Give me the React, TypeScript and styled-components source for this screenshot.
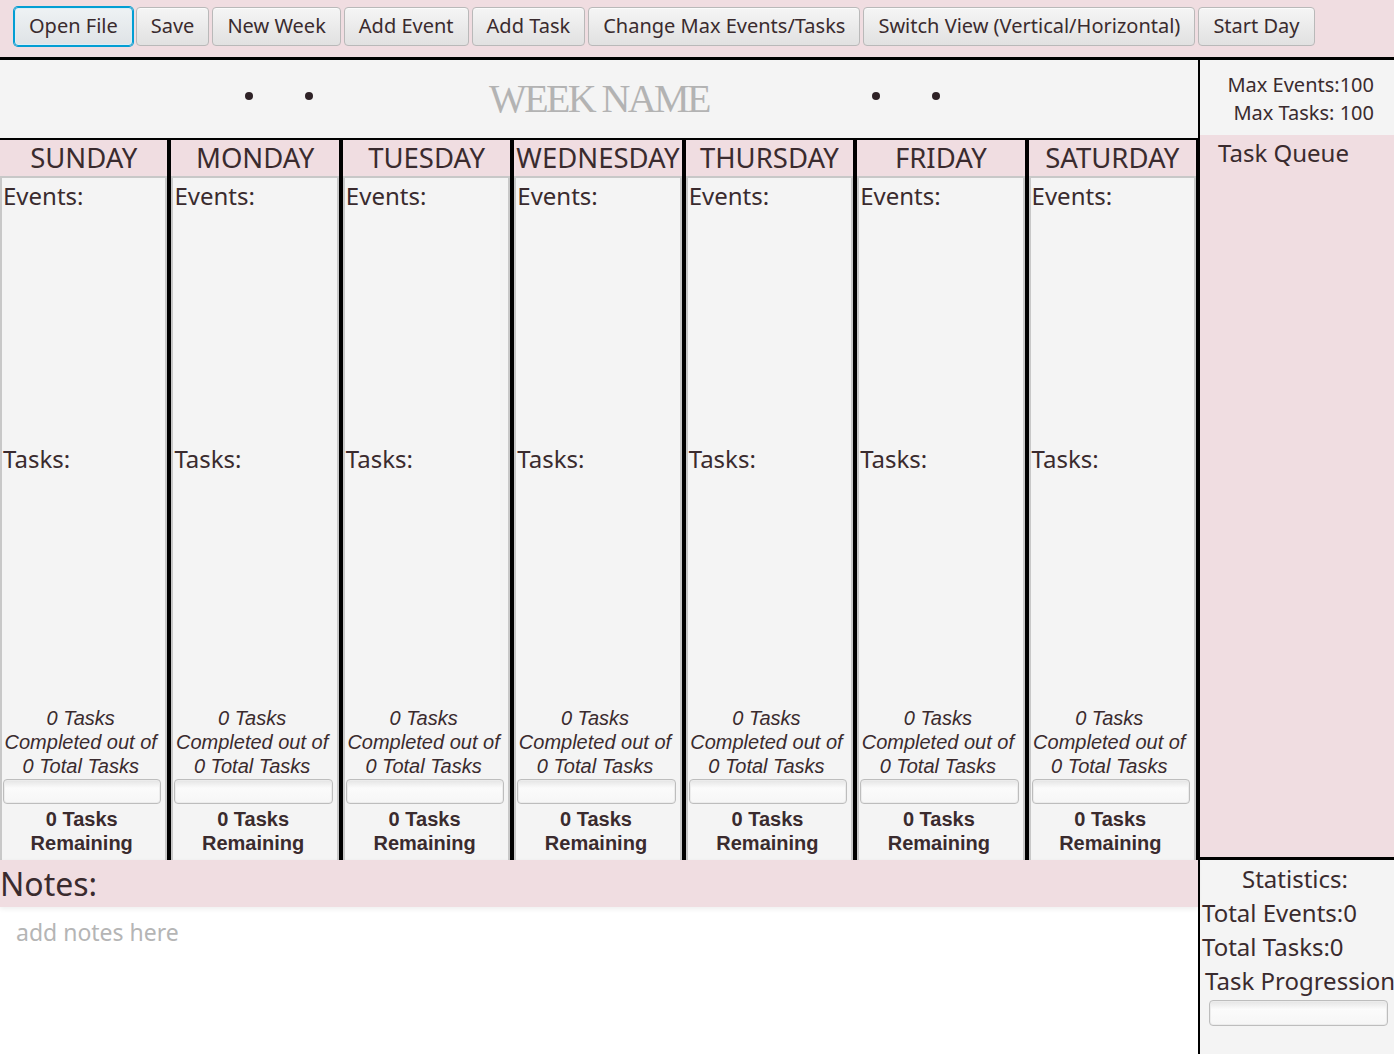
import React from 'react';
import styled, { createGlobalStyle, css } from 'styled-components';

const PINK = '#f0dde1';
const PANEL = '#f4f4f4';
const INK = '#3a2b2e';
const UI_FONT = '"Noto Sans", "Open Sans", sans-serif';

const Global = createGlobalStyle`
  html, body { margin: 0; padding: 0; height: 100%; overflow: hidden; }
  body { font-family: ${UI_FONT}; color: ${INK}; background: ${PINK}; }
  #root { height: 100%; }
  * { box-sizing: border-box; }
`;

const Shell = styled.div`
  display: flex;
  flex-direction: column;
  height: 100vh;
  width: 100%;
`;

const Toolbar = styled.div`
  height: 60px;
  flex: none;
  background: ${PINK};
  border-bottom: 3px solid #000;
  display: flex;
  align-items: flex-start;
  gap: 3px;
  padding: 7px 0 0 14px;
`;

const ToolButton = styled.button<{ $focused?: boolean }>`
  height: 39px;
  padding: 0 14px 2px;
  font-family: ${UI_FONT};
  font-size: 20px;
  color: ${INK};
  border: 1px solid #b9b9b9;
  border-radius: 4px;
  background: linear-gradient(to bottom, #f5f5f5, #e1e1e1);
  box-shadow: inset 0 1px 0 #fbfbfb;
  white-space: nowrap;
  cursor: pointer;
  ${(p) =>
    p.$focused &&
    css`
      border-color: #039ed3;
      box-shadow: 0 0 0 1px #039ed3, inset 0 0 0 1px #dbeef7;
      background: linear-gradient(to bottom, #eef2f4, #dfe3e6);
    `}
`;

const Main = styled.div`
  flex: 1;
  display: flex;
  min-height: 0;
`;

const LeftArea = styled.div`
  width: 1198px;
  flex: none;
  display: flex;
  flex-direction: column;
`;

const WeekHeader = styled.div`
  height: 80px;
  flex: none;
  background: ${PANEL};
  border-bottom: 2px solid #000;
  display: flex;
  align-items: center;
  padding-left: 245px;
`;

const DotGroup = styled.div<{ $gapBefore?: number }>`
  display: flex;
  gap: 52px;
  margin-left: ${(p) => p.$gapBefore ?? 0}px;
  margin-bottom: 6px;
`;

const Dot = styled.span`
  width: 8px;
  height: 8px;
  border-radius: 50%;
  background: #2e2226;
`;

const WeekTitle = styled.div`
  margin-left: 176px;
  font-family: "Liberation Serif", "DejaVu Serif", serif;
  font-size: 40px;
  letter-spacing: -2.6px;
  color: #b3b3b3;
  line-height: 1;
  width: 219px;
  white-space: nowrap;
`;

const DaysGrid = styled.div`
  flex: 1;
  display: grid;
  grid-template-columns: repeat(7, 1fr);
  column-gap: 4px;
  padding-right: 2px;
  background: #000;
  min-height: 0;
`;

const DayColumn = styled.div`
  display: flex;
  flex-direction: column;
  background: ${PINK};
  min-width: 0;
`;

const DayHeader = styled.div`
  height: 36px;
  flex: none;
  text-align: center;
  font-size: 27.5px;
  line-height: 36px;
  white-space: nowrap;
  overflow: hidden;
`;

const DayBody = styled.div`
  flex: 1;
  display: flex;
  flex-direction: column;
  background: ${PANEL};
  border: 2px solid #c8c8c8;
  border-bottom: none;
  padding: 2px 1px 5px;
`;

const SectionLabel = styled.div`
  font-size: 24px;
  line-height: 32px;
`;

const ListArea = styled.div`
  flex: 1;
`;

const CompletedText = styled.div`
  font-family: "Liberation Sans", Arial, sans-serif;
  font-style: italic;
  font-size: 20px;
  line-height: 24px;
  text-align: center;
  white-space: nowrap;
  padding-right: 6px;
`;

const RemainingText = styled.div`
  font-family: "Liberation Sans", Arial, sans-serif;
  font-weight: bold;
  font-size: 20px;
  line-height: 24px;
  text-align: center;
  margin-top: 3px;
  padding-right: 4px;
`;

const ProgressTrack = styled.div<{ $h?: number }>`
  height: ${(p) => p.$h ?? 25}px;
  margin: 1px 3px 0 0;
  border: 1px solid #bdbdbd;
  border-radius: 4px;
  background: linear-gradient(to bottom, #e4e4e4, #fbfbfb 35%, #f6f6f6);
  box-shadow: inset 0 0 0 1px #ececec;
`;

const NotesBar = styled.div`
  height: 47px;
  flex: none;
  background: ${PINK};
  font-size: 32px;
  line-height: 47px;
  position: relative;
  z-index: 1;
  box-shadow: 0 2px 5px rgba(0, 0, 0, 0.07);
`;

const NotesInput = styled.textarea`
  height: 147px;
  flex: none;
  width: 100%;
  border: none;
  outline: none;
  resize: none;
  background: #fff;
  font-family: ${UI_FONT};
  font-size: 23px;
  line-height: 30px;
  padding: 10px 16px;
  color: ${INK};
  &::placeholder {
    color: #b5b5b5;
  }
`;

const Sidebar = styled.div`
  flex: 1;
  display: flex;
  flex-direction: column;
  border-left: 2px solid #000;
  min-width: 0;
`;

const MaxBox = styled.div`
  height: 75px;
  flex: none;
  background: ${PANEL};
  text-align: right;
  padding: 11px 20px 0 0;
  font-size: 20px;
  line-height: 28px;
`;

const TaskQueue = styled.div`
  flex: 1;
  background: ${PINK};
  border-bottom: 3px solid #000;
  padding-left: 18px;
  font-size: 24px;
  line-height: 36px;
`;

const StatsBox = styled.div`
  height: 194px;
  flex: none;
  background: ${PANEL};
  display: flex;
  flex-direction: column;
  padding: 2px 6px 0 2px;
`;

const StatLine = styled.div<{ $center?: boolean; $indent?: number }>`
  font-size: 24px;
  line-height: 34px;
  white-space: nowrap;
  text-align: ${(p) => (p.$center ? 'center' : 'left')};
  padding-left: ${(p) => p.$indent ?? 0}px;
`;

const StatsBar = styled(ProgressTrack)`
  margin: 2px 0 0 7px;
`;

const buttons = [
  'Open File',
  'Save',
  'New Week',
  'Add Event',
  'Add Task',
  'Change Max Events/Tasks',
  'Switch View (Vertical/Horizontal)',
  'Start Day',
];

const days = ['SUNDAY', 'MONDAY', 'TUESDAY', 'WEDNESDAY', 'THURSDAY', 'FRIDAY', 'SATURDAY'];

export default function App() {
  return (
    <Shell>
      <Global />
      <Toolbar>
        {buttons.map((b, i) => (
          <ToolButton key={b} $focused={i === 0}>
            {b}
          </ToolButton>
        ))}
      </Toolbar>
      <Main>
        <LeftArea>
          <WeekHeader>
            <DotGroup>
              <Dot />
              <Dot />
            </DotGroup>
            <WeekTitle>WEEK NAME</WeekTitle>
            <DotGroup $gapBefore={164}>
              <Dot />
              <Dot />
            </DotGroup>
          </WeekHeader>
          <DaysGrid>
            {days.map((d) => (
              <DayColumn key={d}>
                <DayHeader>{d}</DayHeader>
                <DayBody>
                  <SectionLabel>Events:</SectionLabel>
                  <ListArea />
                  <SectionLabel>Tasks:</SectionLabel>
                  <ListArea />
                  <CompletedText>
                    0 Tasks
                    <br />
                    Completed out of
                    <br />0 Total Tasks
                  </CompletedText>
                  <ProgressTrack />
                  <RemainingText>
                    0 Tasks
                    <br />
                    Remaining
                  </RemainingText>
                </DayBody>
              </DayColumn>
            ))}
          </DaysGrid>
          <NotesBar>Notes:</NotesBar>
          <NotesInput placeholder="add notes here" />
        </LeftArea>
        <Sidebar>
          <MaxBox>
            Max Events:100
            <br />
            Max Tasks: 100
          </MaxBox>
          <TaskQueue>Task Queue</TaskQueue>
          <StatsBox>
            <StatLine $center>Statistics:</StatLine>
            <StatLine>Total Events:0</StatLine>
            <StatLine>Total Tasks:0</StatLine>
            <StatLine $indent={3}>Task Progression</StatLine>
            <StatsBar $h={26} />
          </StatsBox>
        </Sidebar>
      </Main>
    </Shell>
  );
}
